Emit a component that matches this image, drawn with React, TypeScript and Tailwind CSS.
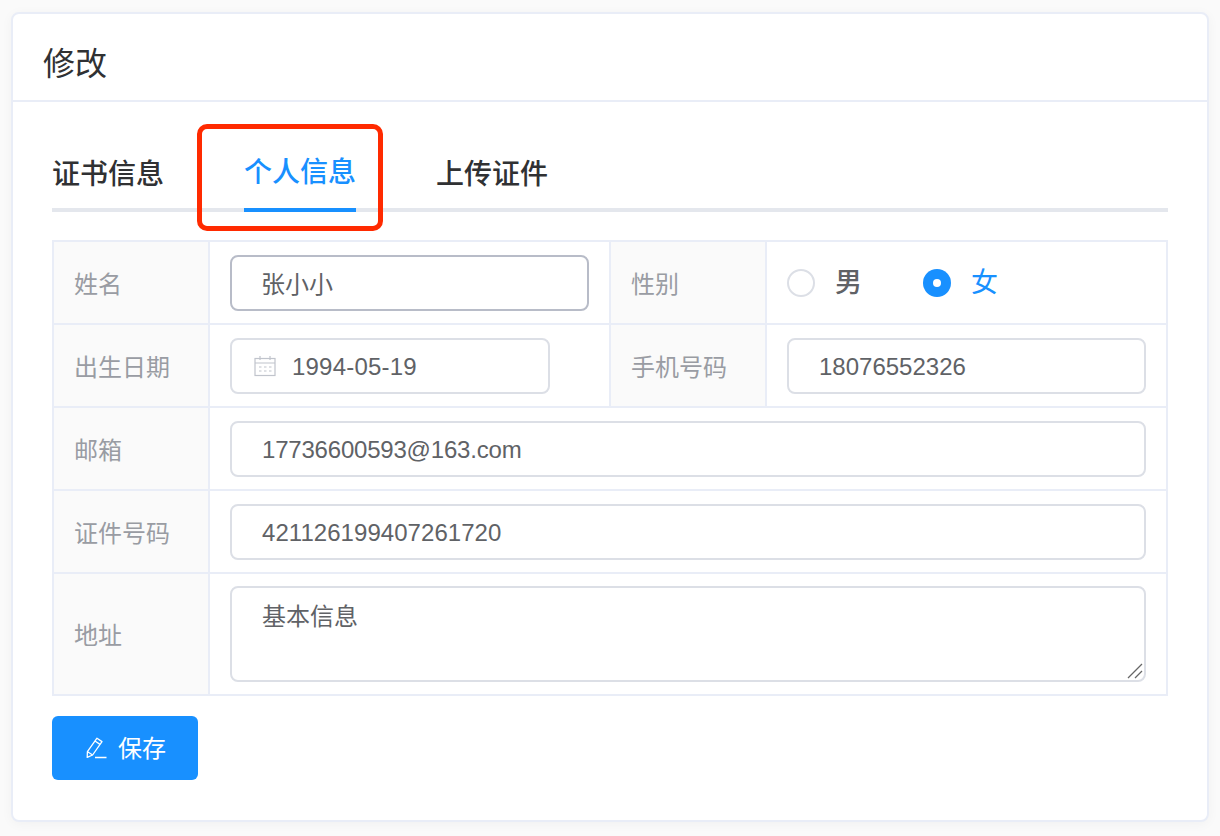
const FONT = "font-['Liberation_Sans','Noto_Sans_CJK_SC',sans-serif]";

const inputClass =
  'h-14 rounded-lg border-2 bg-white pr-4 text-[24px] text-[#606266] outline-none';

function Label({ text }: { text: string }) {
  return (
    <div className="flex w-[156px] shrink-0 items-center border-r-2 border-[#e9edf7] bg-[#fafafa] pl-5 pt-1 text-[24px] text-[#999ca3]">
      {text}
    </div>
  );
}

function CalendarIcon() {
  return (
    <svg width="22" height="22" viewBox="0 0 22 22" fill="none" stroke="#c0c4cc" strokeWidth="1.2">
      <rect x="1" y="3.5" width="20" height="17" />
      <path d="M1 8h20M6 1v4M16 1v4" />
      <path d="M5 12h2.5M10 12h2.5M15 12h2.5M5 16h2.5M10 16h2.5M15 16h2.5" />
    </svg>
  );
}

function PencilIcon() {
  return (
    <svg width="21" height="22" viewBox="0 0 21 22" fill="none" stroke="#fff" strokeWidth="1.3">
      <path d="M11 1.2l5 3.4L6.6 18 1.2 20.4 1.4 14.6z" strokeLinejoin="round" />
      <path d="M9 4l5 3.4M1.6 14.8l5 3.2M9 20.5h11.5" />
    </svg>
  );
}

export default function App() {
  return (
    <div className={`h-[836px] w-[1220px] bg-[#fafafa] pl-[11px] pt-3 ${FONT}`}>
      <div className="h-[810px] w-[1198px] rounded-lg border-2 border-[#e9edf7] bg-white shadow-[0_2px_12px_rgba(0,0,0,0.04)]">
        {/* Header */}
        <div className="flex h-[88px] items-center border-b-2 border-[#e9edf7] pl-[30px] pt-[13px] text-[32px] text-[#303133]">
          修改
        </div>

        <div className="relative px-[39px]">
          {/* Tabs */}
          <div className="flex h-[110px] gap-20 border-b-4 border-[#e4e7ed]">
            <div className="flex h-[110px] items-center pt-[35px] text-[28px] font-medium text-[#303133]">证书信息</div>
            <div className="flex h-[110px] items-center border-b-4 border-[#1890ff] pt-[35px] text-[28px] font-medium text-[#1890ff]">
              个人信息
            </div>
            <div className="flex h-[110px] items-center pt-[35px] text-[28px] font-medium text-[#303133]">上传证件</div>
          </div>

          {/* Annotation */}
          <div className="absolute left-[184px] top-[22px] h-[107px] w-[186px] rounded-[10px] border-[5px] border-[#ff2a00]" />

          {/* Form table */}
          <div className="mt-7 w-[1116px] border-2 border-[#e9edf7]">
            <div className="flex h-[83px] border-b-2 border-[#e9edf7]">
              <Label text="姓名" />
              <div className="flex w-[401px] shrink-0 items-start border-r-2 border-[#e9edf7] pl-5 pt-[13px]">
                <input readOnly value="张小小" className={`${inputClass} w-[359px] border-[#b8bcc8] pb-[2px] pl-[29px]`} />
              </div>
              <Label text="性别" />
              <div className="flex items-center pl-5 text-[27px]">
                <span className="h-7 w-7 rounded-full border-2 border-[#dcdfe6] bg-white" />
                <span className="ml-5 pt-[2px] font-medium text-[#606266]">男</span>
                <span className="ml-[61px] flex h-7 w-7 items-center justify-center rounded-full bg-[#1890ff]">
                  <span className="h-2 w-2 rounded-full bg-white" />
                </span>
                <span className="ml-5 pt-[2px] text-[#1890ff]">女</span>
              </div>
            </div>

            <div className="flex h-[83px] border-b-2 border-[#e9edf7]">
              <Label text="出生日期" />
              <div className="flex w-[401px] shrink-0 items-start border-r-2 border-[#e9edf7] pl-5 pt-[13px]">
                <div className="flex h-14 w-80 items-center rounded-lg border-2 border-[#dcdfe6] pl-[22px] text-[24px] text-[#606266]">
                  <CalendarIcon />
                  <span className="ml-4 pt-[2px] tracking-[0.2px]">1994-05-19</span>
                </div>
              </div>
              <Label text="手机号码" />
              <div className="pl-5 pt-[13px]">
                <input readOnly value="18076552326" className={`${inputClass} w-[359px] border-[#dcdfe6] pl-[30px] pt-[2px]`} />
              </div>
            </div>

            <div className="flex h-[83px] border-b-2 border-[#e9edf7]">
              <Label text="邮箱" />
              <div className="pl-5 pt-[13px]">
                <input
                  readOnly
                  value="17736600593@163.com"
                  className={`${inputClass} w-[916px] border-[#dcdfe6] pl-[30px] pt-[2px] tracking-[-0.2px]`}
                />
              </div>
            </div>

            <div className="flex h-[83px] border-b-2 border-[#e9edf7]">
              <Label text="证件号码" />
              <div className="pl-5 pt-[13px]">
                <input
                  readOnly
                  value="421126199407261720"
                  className={`${inputClass} w-[916px] border-[#dcdfe6] pl-[30px] pt-[2px] tracking-[0.05px]`}
                />
              </div>
            </div>

            <div className="flex h-[120px]">
              <Label text="地址" />
              <div className="relative pl-5 pt-3">
                <textarea
                  readOnly
                  value="基本信息"
                  className="block h-24 w-[916px] resize-none rounded-lg border-2 border-[#dcdfe6] bg-white pl-[30px] pr-4 pt-[13px] text-[24px] leading-[32px] text-[#606266] outline-none"
                />
                {/* resize grip */}
                <svg
                  className="absolute bottom-[15px] left-[917px]"
                  width="16"
                  height="16"
                  viewBox="0 0 16 16"
                  fill="none"
                  stroke="#666"
                  strokeWidth="1.3"
                >
                  <path d="M1 15L15 1M8 15l7-7" />
                </svg>
              </div>
            </div>
          </div>

          {/* Save */}
          <button className="mt-5 flex h-16 w-[146px] items-center rounded-md bg-[#1890ff] pl-[34px] text-[24px] text-white">
            <PencilIcon />
            <span className="ml-[11px] pt-[2px]">保存</span>
          </button>
        </div>
      </div>
    </div>
  );
}
